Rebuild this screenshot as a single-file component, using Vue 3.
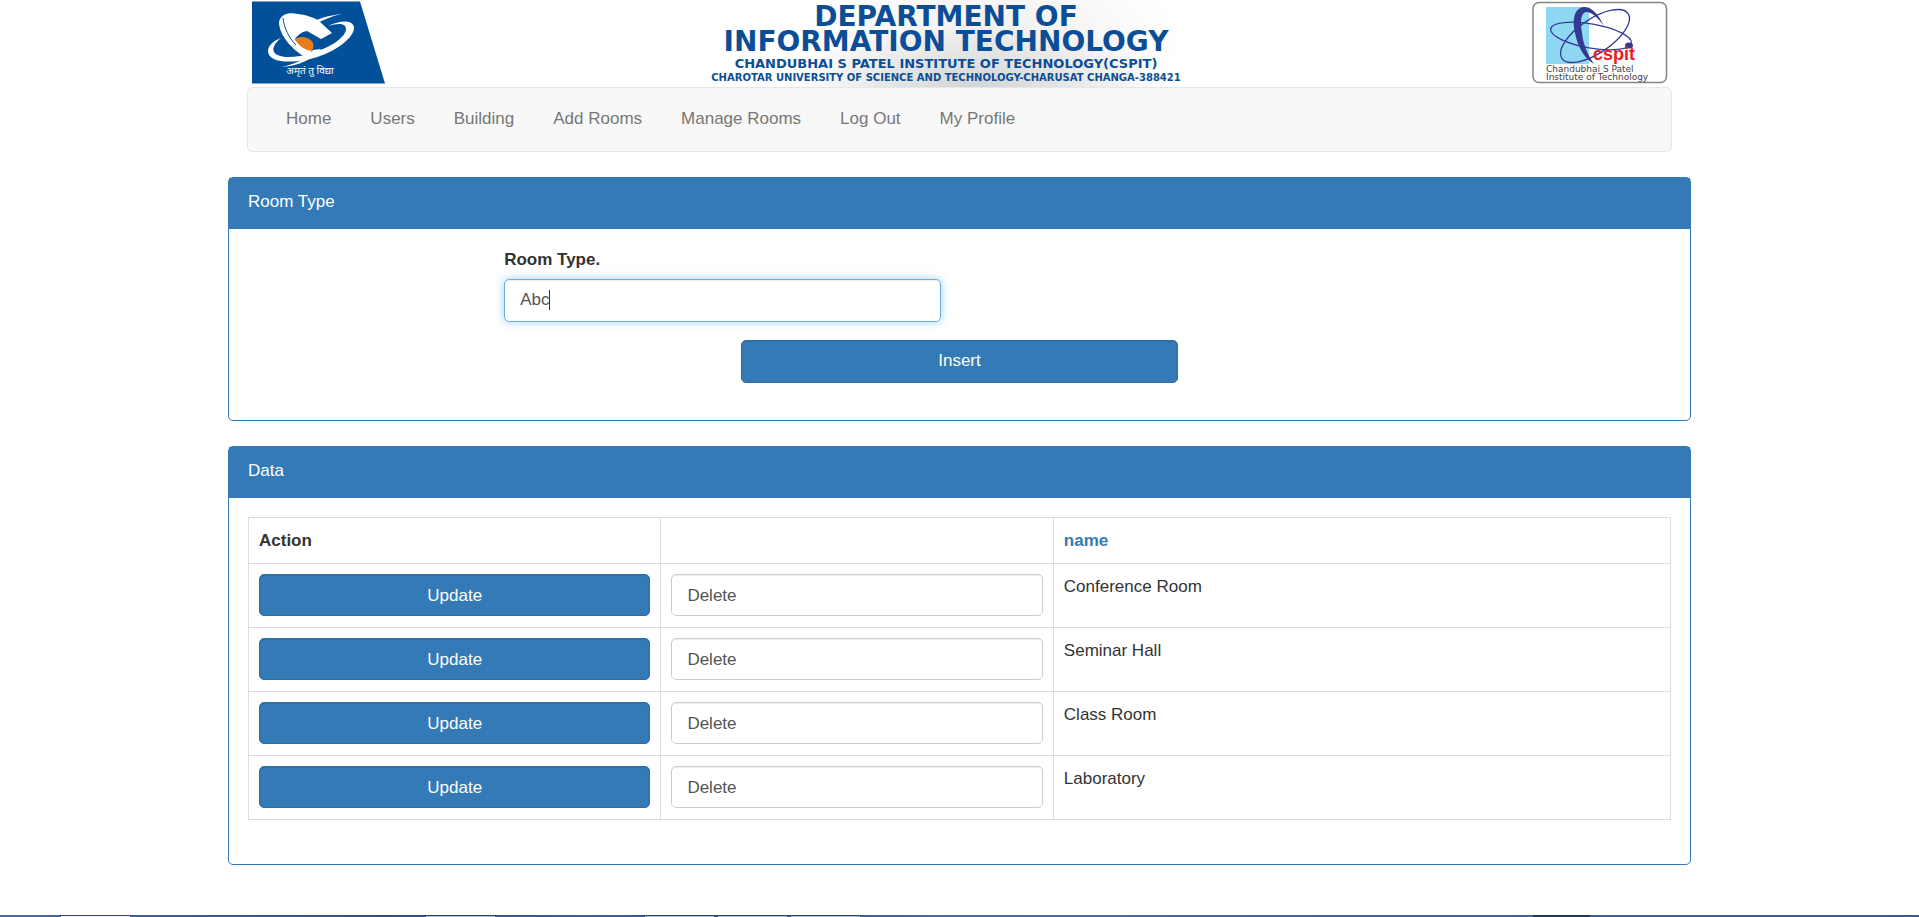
<script setup>
import { ref } from 'vue'

const links = ['Home', 'Users', 'Building', 'Add Rooms', 'Manage Rooms', 'Log Out', 'My Profile']
const rooms = ['Conference Room', 'Seminar Hall', 'Class Room', 'Laboratory']
const roomType = ref('Abc')
</script>

<template>
  <div class="page">
    <div class="container">
      <header class="masthead">
        <svg class="logo-left" width="134" height="84" viewBox="0 0 134 84" role="img" aria-label="CHARUSAT">
          <path d="M0 1.5H108L133 83.500H0Z" fill="#03509a" />
          <path
            d="M76 26C90 19 103 20 102 29C100 40 80 54 58 59C36 64 16 62 16 51C16 46 21 41 29 38C23 43 20 48 22 52C26 59 44 58 60 53C78 48 94 37 94 29C94 23 86 23 76 26Z"
            fill="#fff"
          />
          <path d="M58 23C68 18 78 15 90 14C80 16 70 20 62 25Z" fill="#fff" />
          <path
            d="M27 22C29 13 38 12 46 14C55 15 62 18 66 20L80 33L69 39L55 31C49 32 46 35 43 39C47 46 53 49 60 50L57 59C42 52 27 36 27 22Z"
            fill="#fff"
          />
          <path d="M43 39C49 35 58 37 61 43C62 46 61 49 60 51C52 50 47 46 43 39Z" fill="#e87d1d" />
          <path d="M31 18C32 28 37 38 44 45" fill="none" stroke="#03509a" stroke-width="1" />
          <path d="M69 49C62 58 48 66 30 67C46 63 56 58 61 50Z" fill="#fff" />
          <text x="58" y="74" text-anchor="middle" class="motto">अमृतं तु विद्या</text>
        </svg>

        <div class="banner">
          <h1 class="banner-title"><span>DEPARTMENT OF</span><span>INFORMATION TECHNOLOGY</span></h1>
          <p class="banner-inst">CHANDUBHAI S PATEL INSTITUTE OF TECHNOLOGY(CSPIT)</p>
          <p class="banner-univ">CHAROTAR UNIVERSITY OF SCIENCE AND TECHNOLOGY-CHARUSAT CHANGA-388421</p>
        </div>

        <svg class="logo-right" width="136" height="84" viewBox="0 0 136 84" role="img" aria-label="CSPIT">
          <rect x="1" y="2.500" width="133.500" height="80" rx="6" fill="#fff" stroke="#858585" stroke-width="1.500" />
          <rect x="14" y="7" width="43" height="57" fill="#8fd8f4" />
          <g fill="none" stroke="#343a92" stroke-width="1.300">
            <ellipse cx="59" cy="36" rx="41" ry="12" transform="rotate(10 59 36)" />
            <ellipse cx="63" cy="36" rx="40" ry="17" transform="rotate(-34 63 36)" />
          </g>
          <path
            d="M72 26C67 16 61 7 52 7C42 8 40 20 43 33C46 48 53 59 62 64C56 55 51 44 50 33C48 21 49 13 54 12C60 12 66 18 72 26Z"
            fill="#343a92"
          />
          <ellipse cx="97" cy="45.500" rx="4" ry="3" fill="#343a92" />
          <text x="61" y="60" class="cspit">cspit</text>
          <text x="14" y="72" class="caption">Chandubhai S Patel</text>
          <text x="14" y="80" class="caption">Institute of Technology</text>
        </svg>
      </header>

      <nav class="navbar">
        <a v-for="link in links" :key="link" href="#">{{ link }}</a>
      </nav>

      <section class="panel">
        <h2 class="panel-heading">Room Type</h2>
        <form class="panel-body form-grid" @submit.prevent>
          <div class="field">
            <label for="room-type">Room Type.</label>
            <div class="input-wrap">
              <input id="room-type" v-model="roomType" type="text" />
              <span class="caret"></span>
            </div>
          </div>
          <div class="submit">
            <button type="submit" class="btn-primary">Insert</button>
          </div>
        </form>
      </section>

      <section class="panel">
        <h2 class="panel-heading">Data</h2>
        <div class="panel-body data-body">
          <table>
            <colgroup>
              <col class="col-update" />
              <col class="col-delete" />
              <col />
            </colgroup>
            <thead>
              <tr>
                <th scope="col">Action</th>
                <th></th>
                <th scope="col"><a href="#">name</a></th>
              </tr>
            </thead>
            <tbody>
              <tr v-for="room in rooms" :key="room">
                <td><button type="button" class="btn-primary">Update</button></td>
                <td><button type="button" class="btn-default">Delete</button></td>
                <td>{{ room }}</td>
              </tr>
            </tbody>
          </table>
        </div>
      </section>
    </div>

    <div class="taskbar">
      <svg width="100%" height="2" aria-hidden="true">
        <rect x="60" width="70" height="1" fill="#2b4377" />
        <rect x="61" y="1" width="69" height="1" fill="#f4f6fa" />
        <rect x="425" width="71" height="1" fill="#2b4377" />
        <rect x="426" y="1" width="69" height="1" fill="#a9bcd8" />
        <rect x="644" width="217" height="1" fill="#2b4377" />
        <rect x="645" y="1" width="69" height="1" fill="#a9bcd8" />
        <rect x="718" y="1" width="69" height="1" fill="#a9bcd8" />
        <rect x="791" y="1" width="69" height="1" fill="#a9bcd8" />
        <rect x="1533" width="57" height="2" fill="#23395c" />
      </svg>
    </div>
  </div>
</template>

<style>
body {
  margin: 0;
  background: #fff;
}
</style>

<style scoped>
.page {
  box-sizing: border-box;
  min-height: 100vh;
  display: flex;
  flex-direction: column;
  font-family: "Liberation Sans", Arial, sans-serif;
  font-size: 17px;
  line-height: 25px;
  color: #333;
}

.page *,
.page *::before {
  box-sizing: border-box;
}

.container {
  width: 100%;
  max-width: 1463px;
  margin: 0 auto;
}

.masthead {
  display: flex;
  justify-content: space-between;
  height: 87px;
  margin: 0 19px;
  padding: 0 4px 0 5px;
}

.masthead svg {
  flex: none;
}

.motto {
  font-family: "Noto Sans Devanagari", "Noto Sans", sans-serif;
  font-size: 10px;
  fill: #fff;
}

.cspit {
  font-size: 18px;
  font-weight: 700;
  fill: #ec1c24;
}

.caption {
  font-family: "DejaVu Sans", sans-serif;
  font-size: 9px;
  fill: #444;
}

.banner {
  margin-right: 26px;
  padding: 4px 0 0;
  text-align: center;
  white-space: nowrap;
  font-family: "DejaVu Sans", sans-serif;
  font-weight: 700;
  color: #0b4e97;
  background:
    radial-gradient(ellipse 40% 70% at 56% 100%, #d3d6d6, transparent),
    radial-gradient(ellipse 50% 140% at 60% 50%, #efeeec, transparent 80%);
}

.banner-title {
  margin: 0;
  font-size: 28px;
  line-height: 25px;
}

.banner-title span {
  display: block;
}

.banner-inst {
  margin: 3px 0 0;
  font-size: 13px;
  line-height: 14px;
}

.banner-univ {
  margin: 0;
  font-size: 10px;
  line-height: 13px;
}

.navbar {
  display: flex;
  flex-wrap: wrap;
  column-gap: 39px;
  margin: 0 19px 25px;
  padding: 18px 38px 20px;
  border: 1px solid #e7e7e7;
  border-radius: 5px;
  background: #f8f8f8;
}

.navbar a {
  color: #777;
  text-decoration: none;
}

.panel {
  margin-bottom: 25px;
  border: 1px solid #337ab7;
  border-radius: 5px;
  background: #fff;
}

.panel-heading {
  margin: 0;
  padding: 11px 19px 15px;
  color: #fff;
  background: #337ab7;
  font-size: 17px;
  font-weight: 400;
}

.panel-body {
  padding: 18px 19px 37px;
}

.form-grid {
  display: grid;
  grid-template-columns: repeat(12, 1fr);
  row-gap: 18px;
}

.field {
  grid-column: 3 / span 4;
  padding: 0 19px;
}

.submit {
  grid-column: 5 / span 4;
  padding: 0 19px;
}

label {
  display: block;
  margin-bottom: 7px;
  font-weight: 700;
}

.input-wrap {
  position: relative;
}

input {
  display: block;
  width: 100%;
  height: 43px;
  padding: 6px 15px 8px;
  border: 1px solid #66afe9;
  border-radius: 5px;
  outline: 0;
  color: #555;
  background: #fff;
  font: inherit;
  box-shadow: inset 0 1px 1px rgba(0, 0, 0, 0.075), 0 0 10px rgba(102, 175, 233, 0.6);
}

.caret {
  position: absolute;
  top: 11px;
  left: 45px;
  width: 1px;
  height: 20px;
  background: #333;
}

button {
  display: block;
  width: 100%;
  height: 42px;
  padding: 7px 15px;
  border: 1px solid #2e6da4;
  border-radius: 5px;
  font: inherit;
  box-shadow: inset 0 1px 1px rgba(0, 0, 0, 0.075);
}

.submit button {
  height: 43px;
  padding: 6px 15px 8px;
}

.btn-primary {
  color: #fff;
  background: #337ab7;
}

.btn-default {
  border-color: #ccc;
  color: #555;
  background: #fff;
  text-align: left;
}

.data-body {
  padding-top: 19px;
  padding-bottom: 44px;
}

table {
  width: 100%;
  table-layout: fixed;
  border-collapse: collapse;
}

.col-update {
  width: 29%;
}

.col-delete {
  width: 27.6%;
}

th,
td {
  padding: 10px;
  border: 1px solid #ddd;
  text-align: left;
  vertical-align: top;
}

tbody tr {
  height: 64px;
}

th a {
  color: #337ab7;
  text-decoration: none;
}

.taskbar {
  height: 2px;
  margin-top: auto;
  overflow: hidden;
  background: linear-gradient(90deg, #4a6ba6, #2f4c86 20%, #3a63a4 32%, #2f4c86 35%, #4a6ba6 50%, #3a5a98);
}

.taskbar svg {
  display: block;
}
</style>
